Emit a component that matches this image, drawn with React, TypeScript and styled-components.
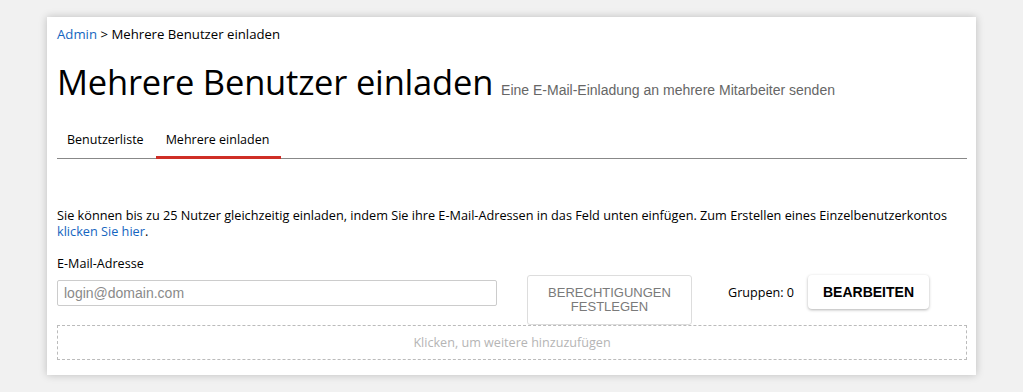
import React from 'react';
import styled, { createGlobalStyle } from 'styled-components';

const GlobalStyle = createGlobalStyle`
  html, body {
    margin: 0;
    padding: 0;
    background: #f1f1f1;
  }
  body {
    font-family: 'Open Sans', 'Noto Sans', sans-serif;
    color: #000;
  }
`;

const Page = styled.div`
  padding: 17px 47px 17px 47px;
`;

const Card = styled.div`
  width: 929px;
  box-sizing: border-box;
  background: #fff;
  padding: 8px 9px 15px 10px;
  box-shadow: 0 0 8px rgba(0, 0, 0, 0.22);
`;

const Breadcrumb = styled.div`
  font-size: 13.2px;
  line-height: 18px;
  a {
    color: #1565c0;
    text-decoration: none;
  }
`;

const Heading = styled.div`
  display: flex;
  align-items: baseline;
  margin-top: 17px;
`;

const Title = styled.h1`
  margin: 0;
  font-size: 34.5px;
  font-weight: 400;
  line-height: 44px;
  letter-spacing: -0.2px;
`;

const Subtitle = styled.span`
  margin-left: 8px;
  font-family: 'Liberation Sans', Arial, sans-serif;
  font-size: 14px;
  color: #666;
`;

const Tabs = styled.div`
  display: flex;
  margin-top: 27px;
  border-bottom: 1px solid #888;
`;

const Tab = styled.div<{ $active?: boolean }>`
  padding: 0 12px 7px 10px;
  font-size: 12.5px;
  line-height: 18px;
  border-bottom: 3px solid ${(p) => (p.$active ? '#cf2e26' : 'transparent')};
  margin-bottom: -1px;
`;

const Intro = styled.p`
  margin: 48px 0 0;
  font-size: 12.7px;
  line-height: 16px;
  a {
    color: #1565c0;
    text-decoration: none;
  }
`;

const Label = styled.div`
  margin-top: 17px;
  font-size: 12.6px;
  line-height: 16px;
`;

const Row = styled.div`
  display: flex;
  align-items: flex-start;
  margin-top: 3px;
`;

const Input = styled.input`
  width: 440px;
  height: 26px;
  box-sizing: border-box;
  margin-top: 5px;
  padding: 0 6px;
  border: 1px solid #ccc;
  border-radius: 2px;
  font-family: 'Liberation Sans', Arial, sans-serif;
  font-size: 14px;
  outline: none;
  &::placeholder {
    color: #8a8a8a;
  }
`;

const PermButton = styled.button`
  width: 165px;
  height: 50px;
  margin-left: 30px;
  background: #fff;
  border: 1px solid #ddd;
  border-radius: 3px;
  font-family: 'Liberation Sans', Arial, sans-serif;
  font-size: 13px;
  line-height: 14px;
  color: #7a7a7a;
  text-transform: uppercase;
  padding: 0 6px;
`;

const Groups = styled.span`
  margin-left: 36px;
  margin-top: 10px;
  font-size: 12.6px;
  line-height: 16px;
`;

const EditButton = styled.button`
  width: 121px;
  height: 34px;
  margin-left: 14px;
  background: #fff;
  border: none;
  border-radius: 4px;
  box-shadow: 0 1px 3px rgba(0, 0, 0, 0.3);
  font-family: 'Liberation Sans', Arial, sans-serif;
  font-weight: 700;
  font-size: 14px;
  color: #000;
`;

const AddBox = styled.div`
  height: 35px;
  box-sizing: border-box;
  border: 1px dashed #bbb;
  display: flex;
  align-items: center;
  justify-content: center;
  font-size: 12.6px;
  color: #b5b5b5;
`;

export default function App() {
  return (
    <Page>
      <GlobalStyle />
      <Card>
        <Breadcrumb>
          <a href="#">Admin</a> &gt; Mehrere Benutzer einladen
        </Breadcrumb>
        <Heading>
          <Title>Mehrere Benutzer einladen</Title>
          <Subtitle>Eine E-Mail-Einladung an mehrere Mitarbeiter senden</Subtitle>
        </Heading>
        <Tabs>
          <Tab>Benutzerliste</Tab>
          <Tab $active>Mehrere einladen</Tab>
        </Tabs>
        <Intro>
          Sie können bis zu 25 Nutzer gleichzeitig einladen, indem Sie ihre E-Mail-Adressen in das Feld
          unten einfügen. Zum Erstellen eines Einzelbenutzerkontos
          <br />
          <a href="#">klicken Sie hier</a>.
        </Intro>
        <Label>E-Mail-Adresse</Label>
        <Row>
          <Input placeholder="login@domain.com" />
          <PermButton>Berechtigungen festlegen</PermButton>
          <Groups>Gruppen: 0</Groups>
          <EditButton>BEARBEITEN</EditButton>
        </Row>
        <AddBox>Klicken, um weitere hinzuzufügen</AddBox>
      </Card>
    </Page>
  );
}
